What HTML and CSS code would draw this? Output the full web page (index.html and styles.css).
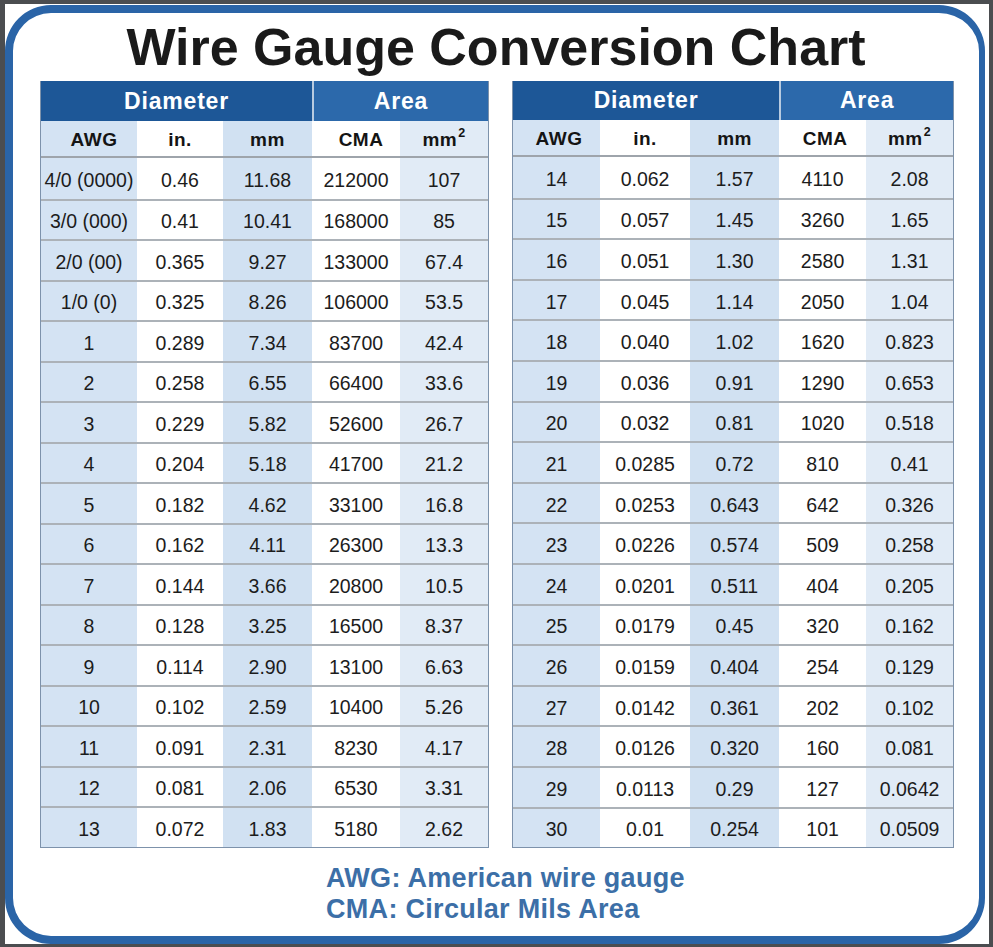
FILE: index.html
```html
<!DOCTYPE html>
<html lang="en">
<head>
<meta charset="utf-8">
<title>Wire Gauge Conversion Chart</title>
<link rel="stylesheet" href="styles.css">
</head>
<body>
<div class="frame">
  <div class="card">
    <h1 class="title">Wire Gauge Conversion Chart</h1>
    <div class="tables">
      <div class="chart chart-l">
        <table>
          <colgroup>
            <col class="c-awg"><col class="c-in"><col class="c-mm"><col class="c-cma"><col class="c-mm2">
          </colgroup>
          <thead>
            <tr class="grp-row"><th colspan="3" class="grp dia">Diameter</th><th colspan="2" class="grp area">Area</th></tr>
            <tr class="sub-row"><th class="shift">AWG</th><th>in.</th><th>mm</th><th class="shift">CMA</th><th>mm<sup>2</sup></th></tr>
          </thead>
          <tbody>
            <tr><td>4/0 (0000)</td><td>0.46</td><td>11.68</td><td>212000</td><td>107</td></tr>
            <tr><td>3/0 (000)</td><td>0.41</td><td>10.41</td><td>168000</td><td>85</td></tr>
            <tr><td>2/0 (00)</td><td>0.365</td><td>9.27</td><td>133000</td><td>67.4</td></tr>
            <tr><td>1/0 (0)</td><td>0.325</td><td>8.26</td><td>106000</td><td>53.5</td></tr>
            <tr><td>1</td><td>0.289</td><td>7.34</td><td>83700</td><td>42.4</td></tr>
            <tr><td>2</td><td>0.258</td><td>6.55</td><td>66400</td><td>33.6</td></tr>
            <tr><td>3</td><td>0.229</td><td>5.82</td><td>52600</td><td>26.7</td></tr>
            <tr><td>4</td><td>0.204</td><td>5.18</td><td>41700</td><td>21.2</td></tr>
            <tr><td>5</td><td>0.182</td><td>4.62</td><td>33100</td><td>16.8</td></tr>
            <tr><td>6</td><td>0.162</td><td>4.11</td><td>26300</td><td>13.3</td></tr>
            <tr><td>7</td><td>0.144</td><td>3.66</td><td>20800</td><td>10.5</td></tr>
            <tr><td>8</td><td>0.128</td><td>3.25</td><td>16500</td><td>8.37</td></tr>
            <tr><td>9</td><td>0.114</td><td>2.90</td><td>13100</td><td>6.63</td></tr>
            <tr><td>10</td><td>0.102</td><td>2.59</td><td>10400</td><td>5.26</td></tr>
            <tr><td>11</td><td>0.091</td><td>2.31</td><td>8230</td><td>4.17</td></tr>
            <tr><td>12</td><td>0.081</td><td>2.06</td><td>6530</td><td>3.31</td></tr>
            <tr><td>13</td><td>0.072</td><td>1.83</td><td>5180</td><td>2.62</td></tr>
          </tbody>
        </table>
      </div>
      <div class="chart chart-r">
        <table>
          <colgroup>
            <col class="c-awg"><col class="c-in"><col class="c-mm"><col class="c-cma"><col class="c-mm2">
          </colgroup>
          <thead>
            <tr class="grp-row"><th colspan="3" class="grp dia">Diameter</th><th colspan="2" class="grp area">Area</th></tr>
            <tr class="sub-row"><th class="shift-s">AWG</th><th>in.</th><th>mm</th><th class="shift-s">CMA</th><th>mm<sup>2</sup></th></tr>
          </thead>
          <tbody>
            <tr><td>14</td><td>0.062</td><td>1.57</td><td>4110</td><td>2.08</td></tr>
            <tr><td>15</td><td>0.057</td><td>1.45</td><td>3260</td><td>1.65</td></tr>
            <tr><td>16</td><td>0.051</td><td>1.30</td><td>2580</td><td>1.31</td></tr>
            <tr><td>17</td><td>0.045</td><td>1.14</td><td>2050</td><td>1.04</td></tr>
            <tr><td>18</td><td>0.040</td><td>1.02</td><td>1620</td><td>0.823</td></tr>
            <tr><td>19</td><td>0.036</td><td>0.91</td><td>1290</td><td>0.653</td></tr>
            <tr><td>20</td><td>0.032</td><td>0.81</td><td>1020</td><td>0.518</td></tr>
            <tr><td>21</td><td>0.0285</td><td>0.72</td><td>810</td><td>0.41</td></tr>
            <tr><td>22</td><td>0.0253</td><td>0.643</td><td>642</td><td>0.326</td></tr>
            <tr><td>23</td><td>0.0226</td><td>0.574</td><td>509</td><td>0.258</td></tr>
            <tr><td>24</td><td>0.0201</td><td>0.511</td><td>404</td><td>0.205</td></tr>
            <tr><td>25</td><td>0.0179</td><td>0.45</td><td>320</td><td>0.162</td></tr>
            <tr><td>26</td><td>0.0159</td><td>0.404</td><td>254</td><td>0.129</td></tr>
            <tr><td>27</td><td>0.0142</td><td>0.361</td><td>202</td><td>0.102</td></tr>
            <tr><td>28</td><td>0.0126</td><td>0.320</td><td>160</td><td>0.081</td></tr>
            <tr><td>29</td><td>0.0113</td><td>0.29</td><td>127</td><td>0.0642</td></tr>
            <tr><td>30</td><td>0.01</td><td>0.254</td><td>101</td><td>0.0509</td></tr>
          </tbody>
        </table>
      </div>
    </div>
    <div class="footer">
      <div>AWG: American wire gauge</div>
      <div>CMA: Circular Mils Area</div>
    </div>
  </div>
</div>
</body>
</html>
```
FILE: styles.css
```css
* { box-sizing: border-box; }
html, body { margin: 0; }
body {
  background: #4b4d50;
  font-family: "Liberation Sans", Arial, sans-serif;
  height: 947px;
  overflow: hidden;
}
.frame {
  margin: 4px 4px 3px 5px;
  height: 940px;
  background: #fff;
  padding: 1px 4px 0 0;
}
.card {
  height: 100%;
  border: 8px solid #2a64a7;
  border-right-width: 6px;
  border-radius: 46px;
  padding-top: 5px;
}
.title {
  margin: 0;
  text-align: center;
  font-size: 52px;
  line-height: 59px;
  font-weight: bold;
  color: #1a1a1a;
}
.tables {
  display: flex;
  align-items: flex-start;
  gap: 23px;
  padding-left: 27px;
  margin-top: 4px;
}
.chart {
  border: 1px solid #7d92ab;
  border-top: none;
}
.chart table {
  border-collapse: separate;
  border-spacing: 0;
  table-layout: fixed;
}
.chart-l table { width: 447px; }
.chart-r table { width: 440px; }
.chart-l .c-awg { width: 96px; }
.chart-l .c-in { width: 86px; }
.chart-l .c-mm { width: 89px; }
.chart-l .c-cma { width: 88px; }
.chart-l .c-mm2 { width: 88px; }
.chart-r .c-awg { width: 87px; }
.chart-r .c-in { width: 90px; }
.chart-r .c-mm { width: 89px; }
.chart-r .c-cma { width: 87px; }
.chart-r .c-mm2 { width: 87px; }
.c-awg { background: #d4e3f3; }
.c-in { background: #fff; }
.c-mm { background: #d1e1f2; }
.c-cma { background: #fff; }
.c-mm2 { background: #e1ebf6; }

th, td { padding: 0; text-align: center; }
.grp {
  color: #fff;
  font-size: 23px;
  letter-spacing: 0.8px;
  font-weight: bold;
}
.grp.dia { background: #1d5797; }
.grp.area { background: #2c69ab; border-left: 2px solid #b8cbe0; }
.sub-row th {
  font-size: 19px;
  letter-spacing: 0.5px;
  font-weight: bold;
  color: #141414;
  border-bottom: 2px solid #9ea4ab;
  padding-top: 3px;
}
.sub-row th.shift { padding-left: 10px; }
.sub-row th.shift-s { padding-left: 5px; }
.sub-row sup {
  font-size: 12.5px;
  line-height: 0;
  vertical-align: 9px;
  margin-left: 1px;
}
td {
  font-size: 19.5px;
  color: #1c1c1c;
  padding-top: 4px;
}
tbody tr + tr td { border-top: 2px solid #acb2b8; }

.chart-l .grp-row { height: 40px; }
.chart-l .sub-row { height: 37px; }
.chart-l tbody tr { height: 40.5px; }
.chart-r .grp-row { height: 38.5px; }
.chart-r .sub-row { height: 37.5px; }
.chart-r tbody tr { height: 40.6px; }

.footer {
  margin: 15px 0 0 313px;
  color: #3c6fa7;
  font-weight: bold;
  font-size: 27px;
  letter-spacing: 0.3px;
  line-height: 31px;
}
```
